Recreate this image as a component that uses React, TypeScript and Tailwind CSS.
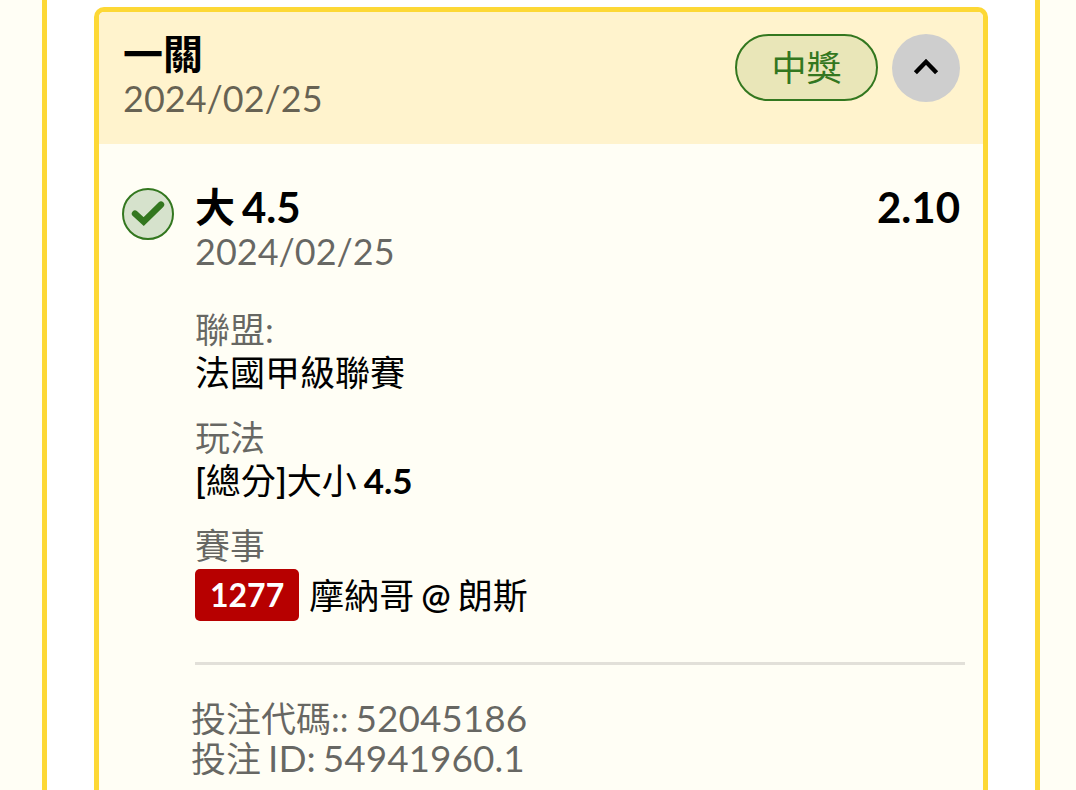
import type { ReactNode } from "react";

const bet = {
  title: "一關",
  date: "2024/02/25",
  status: "中獎",
  side: "大",
  line: "4.5",
  odds: "2.10",
  league: "法國甲級聯賽",
  matchNo: "1277",
  away: "摩納哥",
  home: "朗斯",
  code: "52045186",
  id: "54941960.1",
};

function Field({ label, children }: { label: string; children: ReactNode }) {
  return (
    <div>
      <dt className="text-black/60">{label}</dt>
      <dd>{children}</dd>
    </div>
  );
}

function CardHeader() {
  return (
    <header className="flex items-start justify-between bg-[#fff3cd] pt-5 pr-[23px] pl-6 pb-6">
      <div>
        <h1 className="text-[40px] leading-[44px] font-bold">{bet.title}</h1>
        <p className="text-[36px] leading-[44px] text-black/60">{bet.date}</p>
      </div>
      <div className="flex items-start gap-[14px] pt-[2px]">
        <span className="flex h-[67px] w-[143px] items-center justify-center rounded-full border-2 border-[#33771f] bg-[#e9e6b8] text-[35px] leading-[43px] text-[#33771f]">
          {bet.status}
        </span>
        <button
          type="button"
          aria-label="收起"
          className="flex size-[68px] items-center justify-center rounded-full bg-[#cecece]"
        >
          <svg viewBox="0 0 26 20" className="h-5 w-[26px]" fill="none" stroke="#000" strokeWidth="4.4">
            <path d="M2.4 14.8 13 3.8 23.6 14.8" />
          </svg>
        </button>
      </div>
    </header>
  );
}

function WonIcon() {
  return (
    <svg viewBox="0 0 52 52" className="mt-[3px] size-[52px] shrink-0" fill="none">
      <circle cx="26" cy="26" r="25" fill="#d6e2cc" stroke="#33771f" strokeWidth="2" />
      <path
        d="M13 25.6 21.7 33.6 39 16.6"
        stroke="#33771f"
        strokeWidth="6.4"
        strokeLinecap="round"
      />
    </svg>
  );
}

export default function App() {
  return (
    <div className="flex min-h-screen bg-[#fffef5] pr-9 pl-[42px] font-['Lato','Noto_Sans_CJK_TC',sans-serif] text-black">
      <main className="flex grow border-x-[5px] border-[#fdd835] bg-white px-[47px] pt-[7px]">
        <article className="grow overflow-hidden rounded-t-[10px] border-x-[5px] border-t-[5px] border-[#fdd835] bg-[#fffef5]">
          <CardHeader />
          <div className="flex items-start gap-[21px] pt-[41px] pr-[18px] pl-[23px]">
            <WonIcon />
            <div className="grow">
              <div className="flex justify-between pr-[5px] text-[42px] leading-[44px] font-bold">
                <h2 className="flex gap-[7px]">
                  <span className="text-[40px]">{bet.side}</span>
                  <span>{bet.line}</span>
                </h2>
                <span>{bet.odds}</span>
              </div>
              <p className="text-[36px] leading-[44px] text-black/60">{bet.date}</p>

              <dl className="mt-[35px] flex flex-col gap-[22px] text-[35px] leading-[43px]">
                <Field label="聯盟:">{bet.league}</Field>
                <Field label="玩法">
                  <div className="flex gap-[7px]">
                    <span>
                      <span className="font-semibold">[</span>總分
                      <span className="font-semibold">]</span>大小
                    </span>
                    <b>{bet.line}</b>
                  </div>
                </Field>
                <Field label="賽事">
                  <div className="flex items-center gap-[7px] pt-[2px]">
                    <span className="mr-[3px] rounded-[5px] bg-[#b70000] px-[15px] text-[32px] leading-[52px] font-bold text-white">
                      {bet.matchNo}
                    </span>
                    <span>{bet.away}</span>
                    <span className="font-semibold">@</span>
                    <span>{bet.home}</span>
                  </div>
                </Field>
              </dl>

              <hr className="mt-[41px] border-t-[3px] border-[#e2e0d9]" />
              <div className="-ml-1 mt-[33px] text-[35px] leading-10 text-black/60">
                <p className="flex gap-[7px]">
                  <span>投注代碼::</span>
                  <span className="text-[37px]">{bet.code}</span>
                </p>
                <p className="flex gap-[7px]">
                  <span>投注</span>
                  <span className="text-[37px]">ID:</span>
                  <span className="text-[37px]">{bet.id}</span>
                </p>
              </div>
            </div>
          </div>
        </article>
      </main>
    </div>
  );
}
